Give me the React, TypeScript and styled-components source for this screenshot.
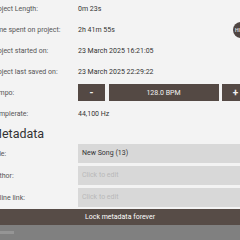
import React from "react";
import styled, { createGlobalStyle } from "styled-components";

const GlobalStyle = createGlobalStyle`
  html, body {
    margin: 0;
    padding: 0;
    background: #f3f3f3;
    overflow: hidden;
  }
  body {
    font-family: Roboto, "Liberation Sans", sans-serif;
  }
`;

const Page = styled.div`
  width: 240px;
  height: 240px;
  display: flex;
  flex-direction: column;
  overflow: hidden;
  position: relative;
`;

const ScrollArea = styled.div`
  flex: 1;
  overflow: hidden;
`;

const Content = styled.div`
  width: 258px;
  margin: -2px 0 0 -9px;
  display: flex;
  flex-direction: column;
`;

const Row = styled.div<{ $h?: number }>`
  display: grid;
  grid-template-columns: 87px 1fr;
  align-items: center;
  height: ${(p) => p.$h ?? 21}px;
  font-size: 7px;
`;

const Label = styled.span`
  color: #555;
`;

const Value = styled.span`
  color: #333;
`;

const Tempo = styled.div`
  display: flex;
  gap: 3.5px;
  height: 17px;
`;

const TempoButton = styled.button<{ $wide?: boolean }>`
  flex: ${(p) => (p.$wide ? "1" : "0 0 27px")};
  height: 17px;
  border: none;
  margin: 0;
  padding: 0;
  background: #544944;
  color: #f2f2f2;
  font-family: inherit;
  font-size: ${(p) => (p.$wide ? "7px" : "10px")};
  font-weight: ${(p) => (p.$wide ? 400 : 700)};
`;

const Heading = styled.h2`
  margin: 0;
  height: 20px;
  line-height: 20px;
  font-size: 12.5px;
  font-weight: 400;
  color: #333;
`;

const Fields = styled.div`
  display: flex;
  flex-direction: column;
  gap: 3px;
`;

const Field = styled.div<{ $empty?: boolean }>`
  height: 19px;
  line-height: 19px;
  padding: 0 4px;
  background: #d8d8d8;
  color: ${(p) => (p.$empty ? "#b9b9b9" : "#333")};
  font-size: 7px;
`;

const Badge = styled.div`
  position: absolute;
  top: 22px;
  left: 233px;
  width: 16px;
  height: 16px;
  border-radius: 50%;
  background: #4f4542;
  color: #ddd;
  font-size: 5px;
  font-weight: 700;
  display: flex;
  align-items: center;
  padding-left: 2px;
  box-sizing: border-box;
`;

const LockBar = styled.button`
  height: 16px;
  border: none;
  margin: 0;
  background: #574c47;
  color: #fff;
  font-family: inherit;
  font-size: 7px;
  flex: none;
`;

const Footer = styled.div`
  height: 15px;
  background: #808080;
  flex: none;
  display: flex;
  align-items: center;
`;

const Thumb = styled.div`
  width: 14px;
  height: 3px;
  background: #959595;
`;

const info = [
  ["Project Length:", "0m 23s"],
  ["Time spent on project:", "2h 41m 55s"],
  ["Project started on:", "23 March 2025 16:21:05"],
  ["Project last saved on:", "23 March 2025 22:29:22"],
];

const meta = [
  ["Title:", "New Song (13)"],
  ["Author:", ""],
  ["Online link:", ""],
];

export default function App() {
  return (
    <Page>
      <GlobalStyle />
      <ScrollArea>
        <Content>
          {info.map(([l, v]) => (
            <Row key={l}>
              <Label>{l}</Label>
              <Value>{v}</Value>
            </Row>
          ))}
          <Row>
            <Label>Tempo:</Label>
            <Tempo>
              <TempoButton>-</TempoButton>
              <TempoButton $wide>128.0 BPM</TempoButton>
              <TempoButton>+</TempoButton>
            </Tempo>
          </Row>
          <Row>
            <Label>Samplerate:</Label>
            <Value>44,100 Hz</Value>
          </Row>
          <Heading>Metadata</Heading>
          <Fields>
            {meta.map(([l, v]) => (
              <Row key={l} $h={19}>
                <Label>{l}</Label>
                <Field $empty={!v}>{v || "Click to edit"}</Field>
              </Row>
            ))}
          </Fields>
        </Content>
      </ScrollArea>
      <Badge>HI</Badge>
      <LockBar>Lock metadata forever</LockBar>
      <Footer>
        <Thumb />
      </Footer>
    </Page>
  );
}
